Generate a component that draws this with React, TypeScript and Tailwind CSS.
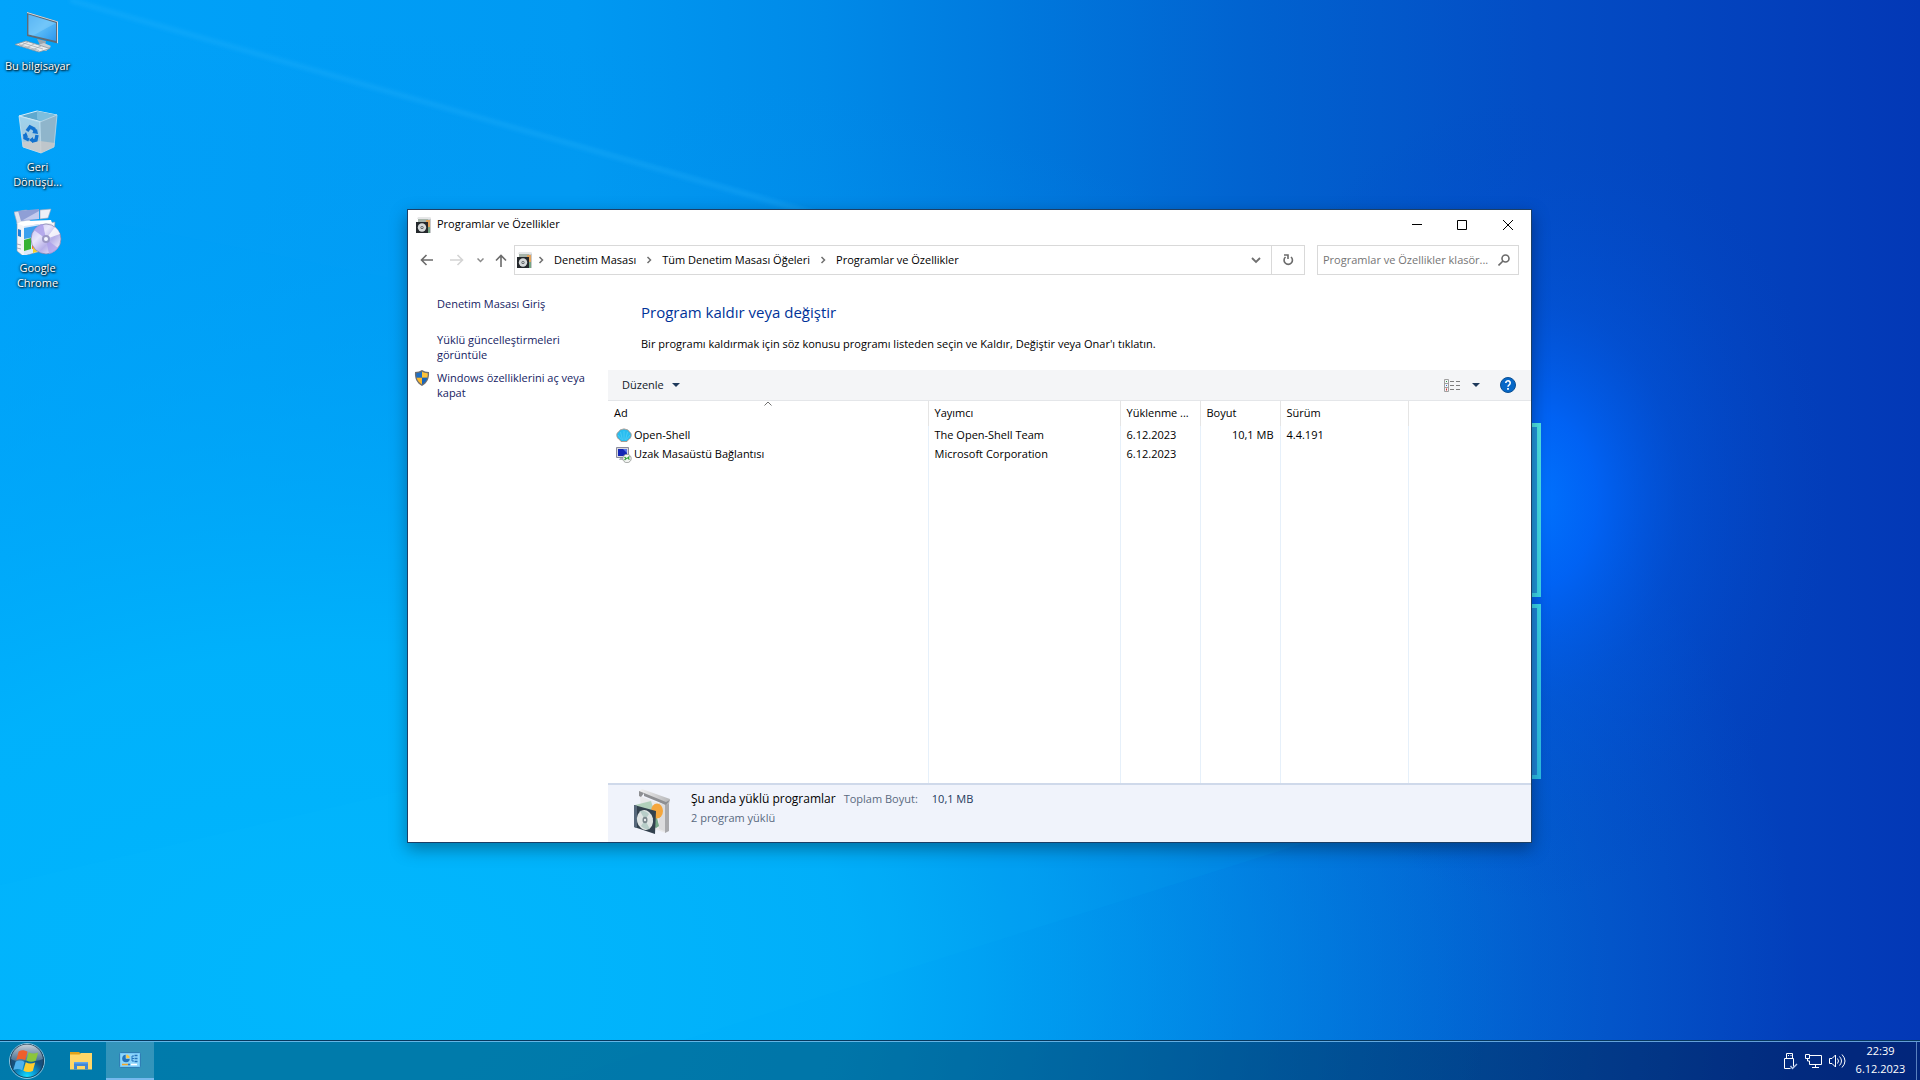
import React from "react";

type Program = {
  name: string;
  publisher: string;
  date: string;
  size: string;
  version: string;
  icon: React.ReactNode;
};

const Wallpaper = () => (
  <svg
    className="absolute inset-0 w-full h-full"
    viewBox="0 0 1920 1080"
    preserveAspectRatio="xMidYMid slice"
    aria-hidden="true"
  >
    <defs>
      <linearGradient id="sky" x1="0" y1="0" x2="1920" y2="0" gradientUnits="userSpaceOnUse">
        <stop offset="0" stopColor="#00a4fb" />
        <stop offset="0.3" stopColor="#0099f2" />
        <stop offset="0.43" stopColor="#008ae8" />
        <stop offset="0.52" stopColor="#007ade" />
        <stop offset="0.65" stopColor="#0163d0" />
        <stop offset="0.8" stopColor="#034dc5" />
        <stop offset="1" stopColor="#0338b6" />
      </linearGradient>
      <radialGradient id="cyan" cx="0" cy="0" r="1" gradientUnits="userSpaceOnUse" gradientTransform="translate(350 980) scale(1450 950)">
        <stop offset="0" stopColor="#00b6fd" />
        <stop offset="0.35" stopColor="#00b4fc" stopOpacity="0.85" />
        <stop offset="0.7" stopColor="#00a2f6" stopOpacity="0.35" />
        <stop offset="1" stopColor="#0090ee" stopOpacity="0" />
      </radialGradient>
      <radialGradient id="glow" cx="0" cy="0" r="1" gradientUnits="userSpaceOnUse" gradientTransform="translate(1530 500) scale(300 400)">
        <stop offset="0" stopColor="#0074ff" />
        <stop offset="0.22" stopColor="#0066fc" stopOpacity="0.85" />
        <stop offset="0.5" stopColor="#0258e4" stopOpacity="0.4" />
        <stop offset="1" stopColor="#0247c2" stopOpacity="0" />
      </radialGradient>
      <linearGradient id="pane" x1="0" y1="424" x2="0" y2="780" gradientUnits="userSpaceOnUse">
        <stop offset="0" stopColor="#4fe6e6" />
        <stop offset="0.5" stopColor="#3cd8ea" />
        <stop offset="1" stopColor="#2cc0e8" />
      </linearGradient>
      <filter id="soft" x="-20%" y="-20%" width="140%" height="140%">
        <feGaussianBlur stdDeviation="2" />
      </filter>
    </defs>
    <rect width="1920" height="1080" fill="url(#sky)" />
    <rect width="1920" height="1080" fill="url(#cyan)" />
    <rect width="1920" height="1080" fill="url(#glow)" />
    <path d="M70 0 L1100 288 L1100 420 L0 200 L0 0z" fill="#14b0ff" opacity="0.06" />
    <path d="M70 0 L815 214" stroke="#3cc0ff" strokeWidth="4" opacity="0.25" filter="url(#soft)" />
    <path d="M0 885 L620 740 L1340 830 L1298 845 L700 1035 L560 1080 L0 1080z" fill="#14c4ff" opacity="0.07" />
    <rect x="1380" y="425" width="159" height="170" fill="#2196dc" stroke="url(#pane)" strokeWidth="4" />
    <rect x="1380" y="606" width="159" height="171" fill="#1f86da" stroke="url(#pane)" strokeWidth="4" />
  </svg>
);

const ComputerIcon = () => (
  <svg width="48" height="48" viewBox="3 -3 48 48">
    <defs>
      <linearGradient id="screen" x1="0" y1="0" x2="1" y2="1">
        <stop offset="0" stopColor="#2f9df0" />
        <stop offset="0.5" stopColor="#5bbcf8" />
        <stop offset="1" stopColor="#2b97ee" />
      </linearGradient>
    </defs>
    <path d="M26 31l9 2-1 5 6 1-5 4-11-3 5-3z" fill="#9aa5ae" />
    <path d="M24 38l9-3 7 3-5 5z" fill="#c7ced4" />
    <path d="M16 4l31 9.500v22L16 28z" fill="#5d6b78" />
    <path d="M16 4l31 9.500v22L46 35V14L16 5z" fill="#d7dde2" />
    <path d="M17.500 6.500L45 15v18L17.500 26.500z" fill="url(#screen)" />
    <path d="M17.500 6.500L45 15 22 27.600l-4.500-1.100z" fill="#8fd2fb" opacity="0.45" />
    <path d="M4 36.500L15 33l24 7.500L28 44z" fill="#e9ecee" stroke="#8b959d" strokeWidth="0.800" />
    <path d="M8 36.500l20 6M12 35l20 6M9 38l8-4M15 40l9-4.500M21 42l9-4" stroke="#9da6ad" strokeWidth="0.700" />
  </svg>
);

const RecycleBinIcon = () => (
  <svg width="48" height="48" viewBox="2 -3 48 48">
    <defs>
      <linearGradient id="binl" x1="0" y1="0" x2="0" y2="1">
        <stop offset="0" stopColor="#9fd3ee" />
        <stop offset="1" stopColor="#a9c3d3" />
      </linearGradient>
    </defs>
    <path d="M7 7L25 2l20 4-15 7z" fill="#5ea9cf" stroke="#d9eef8" />
    <path d="M25 2v8l5 3L45 6z" fill="#7dbedd" />
    <path d="M7 7l21 6 1 31-18-6z" fill="url(#binl)" stroke="#cfe6f2" strokeWidth="0.800" />
    <path d="M45 6L28 13l1 31 13-6z" fill="#8fb5cb" stroke="#bcd9e8" strokeWidth="0.800" />
    <path d="M10 33l18-1 15 2-1 4-13 6-18-6z" fill="#d3cdcb" opacity="0.7" />
    <g fill="none" stroke="#1272cf" strokeWidth="3.400">
      <path d="M15 22l3-4 4 2 1 3" />
      <path d="M25 26l-1 5-4 1" />
      <path d="M17 31l-4-2 0-4" />
    </g>
    <path d="M20 24l6 1-1-5zM21 28v6l-4-3zM11 27l5 1-2-5z" fill="#1272cf" />
  </svg>
);

const SetupIcon = () => (
  <svg width="48" height="48" viewBox="1 -3 48 48">
    <defs>
      <linearGradient id="cd" x1="0" y1="0" x2="1" y2="1">
        <stop offset="0" stopColor="#c3baf2" />
        <stop offset="0.35" stopColor="#e9e6fb" />
        <stop offset="0.6" stopColor="#b8b0e8" />
        <stop offset="1" stopColor="#fdfdff" />
      </linearGradient>
    </defs>
    <path d="M4 13l16 2 22-3-2 26-30 8-6-5z" fill="#f2f4f8" stroke="#8d93a8" strokeWidth="0.600" />
    <path d="M1 2l12-2 4 1v10l-13 2z" fill="#dfe4ef" stroke="#9ba3b8" strokeWidth="0.600" />
    <path d="M5 1l21-2v10L8 11z" fill="#8f9fd6" />
    <path d="M10 10l16-9v8z" fill="#c3cbee" />
    <path d="M27 0l11-1-3 9-8 1z" fill="#eef0f7" stroke="#9ba3b8" strokeWidth="0.600" />
    <path d="M3 13l9-2 26-1 1 3-28 3z" fill="#ffffff" />
    <path d="M11 16l20-2v26l-20 5z" fill="#dbe9fb" />
    <path d="M11 18l17-3-7 12-10 2z" fill="#3aa0ee" />
    <path d="M19 26l8-3v14l-8 2z" fill="#ff7a22" />
    <path d="M11 30l7-2v11l-7 2z" fill="#35b233" />
    <path d="M20 38l6-1v4l-6 2z" fill="#f4cf2c" />
    <path d="M5 19l3 1v7l-3-1z" fill="#1f7ed8" />
    <path d="M4 34l4 1M4 38l4 1" stroke="#a5abbb" />
    <circle cx="33" cy="29" r="15" fill="url(#cd)" stroke="#8480a8" strokeWidth="0.700" />
    <path d="M33 29L21 20a15 15 0 0 1 9-6z" fill="#a99be9" opacity="0.8" />
    <path d="M33 29l12 9a15 15 0 0 1-9 6z" fill="#a99be9" opacity="0.7" />
    <path d="M33 29l14-5a15 15 0 0 0-5-7z" fill="#fff" opacity="0.8" />
    <circle cx="33" cy="29" r="4" fill="#9d98c4" />
    <circle cx="33" cy="29" r="2" fill="#f4f6ff" />
  </svg>
);

const ProgramsIcon = () => (
  <svg className="shrink-0" width="16" height="16" viewBox="0 0 16 16">
    <path d="M2 0h12l1 2v14h-4V4H2z" fill="#c9cbcd" />
    <path d="M2 0h12l1 2H1z" fill="#e6e7e8" />
    <path d="M2 2h10v3H2z" fill="#a8b5ab" />
    <path d="M10 3h4v7h-4z" fill="#e2a35c" />
    <path d="M11 10h3v6h-3z" fill="#76a583" />
    <rect y="5" width="12" height="11" fill="#24282c" />
    <circle cx="6" cy="10.500" r="4.200" fill="#d6d9da" />
    <circle cx="6" cy="10.500" r="1.500" fill="#4e5558" />
    <circle cx="6" cy="10.500" r="0.700" fill="#fff" />
  </svg>
);

const ProgramsLargeIcon = () => (
  <svg className="shrink-0" width="48" height="48" viewBox="0 0 48 48">
    <defs>
      <linearGradient id="box" x1="0" y1="0" x2="1" y2="0">
        <stop offset="0" stopColor="#f2f2f2" />
        <stop offset="1" stopColor="#b6b6b8" />
      </linearGradient>
    </defs>
    <path d="M10 7l26 10v27L12 36z" fill="#e9e9ea" />
    <path d="M29 14l8 2v27l-8-3z" fill="#dcdcde" />
    <path d="M35 15l4-3v30l-4 2z" fill="#a9a9ac" />
    <path d="M9 2l3-2 28 10-1 5-4 1L14 5l-3 3-2-1z" fill="url(#box)" />
    <path d="M9 2l5 2-3 4-2-1zM14 4l22 9 4-2-4 5-22-9z" fill="#8e8f92" />
    <path d="M5 16l16-4 8 25-5 3z" fill="#b2d0bb" />
    <path d="M22 35l4 4 3-2-3-12z" fill="#78a989" />
    <ellipse cx="27" cy="22" rx="6" ry="7.500" fill="#f5a63c" />
    <path d="M4 16l22 6-1 23L4 38z" fill="#33414e" />
    <path d="M4 16l3 1v22l-3-1z" fill="#56677a" />
    <ellipse cx="15" cy="31" rx="8" ry="10" transform="rotate(-12 15 31)" fill="#dfe4e3" />
    <path d="M15 31l-5-9c4-1 7 1 9 3zM15 31l5 9c-4 1-7-1-9-3z" fill="#b8cdc8" />
    <ellipse cx="15" cy="31" rx="2.500" ry="3.200" fill="#7a868c" />
    <ellipse cx="15" cy="31" rx="1" ry="1.300" fill="#f6f7f7" />
  </svg>
);

const ShieldIcon = () => (
  <svg className="shrink-0" width="16" height="16" viewBox="0 0 16 16">
    <path d="M8 0c2 1.200 4 2 7 2 0.500 6-1.500 11-7 14C2.500 13 .5 8 1 2 4 2 6 1.200 8 0z" fill="#6d6f72" />
    <path d="M8 1.500C6.500 2.500 4.800 3 2.300 3.200c-.1 1.700 0 3.100.4 4.600H8z" fill="#1e6fc4" />
    <path d="M8 1.500c1.500 1 3.200 1.500 5.700 1.700.1 1.700 0 3.100-.4 4.600H8z" fill="#fdc33a" />
    <path d="M2.700 7.800c.7 2.800 2.300 5 5.300 6.800V7.800z" fill="#fdb92e" />
    <path d="M13.300 7.800c-.7 2.800-2.300 5-5.300 6.800V7.800z" fill="#1565bd" />
  </svg>
);

const ShellIcon = () => (
  <svg className="shrink-0" width="16" height="16" viewBox="0 0 16 16">
    <path
      d="M5 13.500L4 12C2 11 .7 9 .8 7 .8 5.500 1.500 4.300 2.800 3.800 3.500 2 5 1.500 6 1.600c1-.9 3-.9 4 0 1.500-.1 2.700.7 3.200 2.200 1.300.5 2 1.700 2 3.200.1 2-1.200 4-3.200 5l-1 1.500z"
      fill="#28bdf0"
      stroke="#a9958a"
      strokeWidth="0.900"
    />
    <path d="M8 12V3M6.500 12L4.500 4M9.500 12l2-8M5.500 11.500L2 7M10.500 11.500L14 7" stroke="#63d4f7" strokeWidth="0.600" />
  </svg>
);

const RemoteIcon = () => (
  <svg className="shrink-0" width="16" height="16" viewBox="0 0 16 16">
    <path d="M.5.500h12v10h-12z" fill="#d9d9e2" stroke="#8b8b9a" />
    <path d="M2 2h9v7H2z" fill="#1427b4" />
    <path d="M7 2h4v4z" fill="#5b76ea" />
    <path d="M4 11h5v2H3z" fill="#b5b5bf" />
    <circle cx="11" cy="11.500" r="4.200" fill="#f3f4f2" stroke="#8f9490" strokeWidth="0.800" />
    <path d="M8.500 10l1.800 1.500-1.800 1.500M13.500 9.500L11.700 11l1.800 1.500" fill="none" stroke="#31a336" strokeWidth="1.200" />
  </svg>
);

const StartOrb = () => (
  <svg width="38" height="38" viewBox="0 0 38 38">
    <defs>
      <radialGradient id="orb" cx="0.5" cy="0.950" r="0.850">
        <stop offset="0" stopColor="#18e2ff" />
        <stop offset="0.3" stopColor="#0797d2" />
        <stop offset="0.6" stopColor="#14517f" />
        <stop offset="1" stopColor="#27496b" />
      </radialGradient>
      <linearGradient id="shine" x1="0" y1="0" x2="0" y2="1">
        <stop offset="0" stopColor="#fff" stopOpacity="0.75" />
        <stop offset="1" stopColor="#b9cbdc" stopOpacity="0.3" />
      </linearGradient>
    </defs>
    <circle cx="19" cy="19" r="17.500" fill="url(#orb)" stroke="#8fc3dc" />
    <circle cx="19" cy="19" r="16.500" fill="none" stroke="#17384f" strokeWidth="0.800" />
    <path d="M3 17C4 8 11 2.500 19 2.500S34 8 35 17c-6 3-10 1-16 1.500S8 20 3 17z" fill="url(#shine)" />
    <g transform="translate(-3.500 -3) scale(1.180)">
      <path d="M12 10.500c3-1.500 5-1 7.500.3L17.500 18c-2.500-1.300-4.500-1.500-7.500-.3z" fill="#ee5f2c" />
      <path d="M20.500 11.300c2.500 1.300 5 1.500 8 .2l-2 7c-3 1.200-5.500 1-8-.2z" fill="#8cc63c" />
      <path d="M9.500 19c3-1.300 5-1 7.500.3l-2 7.200c-2.500-1.300-4.500-1.500-7.500-.3z" fill="#4fb2ee" />
      <path d="M18 19.700c2.500 1.300 5 1.500 8 .2l-2 7.300c-3 1.200-5.500 1-8-.2z" fill="#ffcd2e" />
    </g>
  </svg>
);

const ExplorerIcon = () => (
  <svg width="22" height="18" viewBox="0 0 22 18">
    <path d="M0 0h9l2 2h11v4H0z" fill="#e0a21a" />
    <path d="M0 2.500h9.500l1.500-1.500h11V17.500H0z" fill="#ffd768" />
    <path d="M4 10h14v7.500h-3V14H7v3.500H4z" fill="#3f87d8" />
    <path d="M4 10h14v1.500H4z" fill="#62a6ec" />
  </svg>
);

const ControlPanelIcon = () => (
  <svg width="22" height="16" viewBox="0 0 22 16">
    <rect x="0.500" y="0.500" width="21" height="15" rx="1" fill="#5cbcf2" stroke="#2f7fb5" />
    <rect x="1.500" y="1.500" width="19" height="13" fill="#8fd6fb" />
    <circle cx="7" cy="6.500" r="3.800" fill="#2173bd" />
    <path d="M7 6.500V2.300a4.200 4.200 0 0 1 4 4.200z" fill="#ffc43d" stroke="#8fd6fb" strokeWidth="0.700" />
    <path d="M13 4v5M13 6.500h2M13 9h2M13 4h2" stroke="#2173bd" fill="none" />
    <path d="M15.500 3.500h3M15.500 6.500h3M15.500 9.500h3" stroke="#2173bd" strokeWidth="1.400" />
    <path d="M3 12.500h6" stroke="#f0a52b" strokeWidth="1.500" />
    <path d="M12 12.500h6" stroke="#fff" strokeWidth="1.500" />
    <circle cx="10" cy="12.500" r="1" fill="#2173bd" />
  </svg>
);

const Crumb = ({ label }: { label: string }) => (
  <li className="flex items-center">
    <svg className="mx-1" width="8" height="8" viewBox="0 0 8 8" fill="none" stroke="#707070" strokeWidth="1.500">
      <path d="M2.500 1l3 3-3 3" />
    </svg>
    <button className="px-[5px]">{label}</button>
  </li>
);

const Caret = () => (
  <svg width="8" height="4" viewBox="0 0 8 4">
    <path d="M0 0h8L4 4z" fill="#1e395b" />
  </svg>
);

const programs: Program[] = [
  { name: "Open-Shell", publisher: "The Open-Shell Team", date: "6.12.2023", size: "10,1 MB", version: "4.4.191", icon: <ShellIcon /> },
  { name: "Uzak Masaüstü Bağlantısı", publisher: "Microsoft Corporation", date: "6.12.2023", size: "", version: "", icon: <RemoteIcon /> },
];

const TitleBar = () => (
  <header className="flex items-center h-[29px] pl-2">
    <ProgramsIcon />
    <h1 className="flex-1 ml-[5px] text-black">Programlar ve Özellikler</h1>
    <button className="w-[45px] h-full flex items-center justify-center" aria-label="Simge durumuna küçült">
      <svg width="10" height="10" viewBox="0 0 10 10" stroke="#000"><path d="M0 4.500h10" /></svg>
    </button>
    <button className="w-[45px] h-full flex items-center justify-center" aria-label="Ekranı kapla">
      <svg width="10" height="10" viewBox="0 0 10 10" stroke="#000" fill="none"><path d="M.5.500h9v9h-9z" /></svg>
    </button>
    <button className="w-[47px] h-full flex items-center justify-center" aria-label="Kapat">
      <svg width="10" height="10" viewBox="0 0 10 10" stroke="#000"><path d="M0 0l10 10M10 0L0 10" /></svg>
    </button>
  </header>
);

const NavBar = () => (
  <nav className="flex items-center mt-[6px] pr-3 h-[30px]">
    <button className="w-[38px] flex justify-center" aria-label="Geri">
      <svg width="14" height="12" viewBox="0 0 14 12" fill="none" stroke="#6b6b6b" strokeWidth="1.600"><path d="M13 6H2M6.500 1L1.500 6l5 5" /></svg>
    </button>
    <button className="w-[22px] flex justify-center" aria-label="İleri">
      <svg width="14" height="12" viewBox="0 0 14 12" fill="none" stroke="#d4d4d4" strokeWidth="1.600"><path d="M0 6h12M7.500 1l5 5-5 5" /></svg>
    </button>
    <button className="w-6 flex justify-center" aria-label="Son konumlar">
      <svg width="7" height="5" viewBox="0 0 7 5" fill="none" stroke="#8a8a8a" strokeWidth="1.500"><path d="M.5.500l3 3 3-3" /></svg>
    </button>
    <button className="w-[18px] flex justify-center" aria-label="Yukarı">
      <svg width="12" height="13" viewBox="0 0 12 13" fill="none" stroke="#6b6b6b" strokeWidth="1.600"><path d="M6 13V2M1 6.500l5-5 5 5" /></svg>
    </button>
    <div className="flex flex-1 items-center h-[30px] ml-1 border border-[#d9d9d9]">
      <div className="pl-[2px]">
        <ProgramsIcon />
      </div>
      <ol className="flex flex-1 items-center">
        <Crumb label="Denetim Masası" />
        <Crumb label="Tüm Denetim Masası Öğeleri" />
        <Crumb label="Programlar ve Özellikler" />
      </ol>
      <button className="w-[30px] flex justify-center" aria-label="Önceki konumlar">
        <svg width="10" height="7" viewBox="0 0 10 7" fill="none" stroke="#707070" strokeWidth="1.800"><path d="M1 1l4 4 4-4" /></svg>
      </button>
      <button className="w-[33px] h-full flex items-center justify-center border-l border-[#d9d9d9]" aria-label="Yenile">
        <svg width="12" height="12" viewBox="0 0 12 12" fill="none" stroke="#6b6b6b" strokeWidth="1.600">
          <path d="M3.500 3a4.200 4.200 0 1 0 5.500 0" />
          <path d="M2 1h4v4" />
        </svg>
      </button>
    </div>
    <div className="flex items-center w-[202px] h-[30px] ml-3 pl-[5px] pr-2 border border-[#d9d9d9]">
      <input
        type="text"
        aria-label="Ara"
        placeholder="Programlar ve Özellikler klasör..."
        className="flex-1 min-w-0 outline-none placeholder:text-[#757575]"
      />
      <svg className="shrink-0" width="12" height="12" viewBox="0 0 12 12" fill="none" stroke="#6b6b6b" strokeWidth="1.600">
        <circle cx="7.500" cy="4.500" r="3.500" />
        <path d="M5 7L.5 11.500" />
      </svg>
    </div>
  </nav>
);

const Sidebar = () => (
  <aside className="w-[200px] shrink-0 pl-[6px] pt-[21px] leading-[15px] text-[#151c63]">
    <a href="#" className="block ml-[23px]">Denetim Masası Giriş</a>
    <a href="#" className="block ml-[23px] mt-[21px] w-[150px]">Yüklü güncelleştirmeleri görüntüle</a>
    <a href="#" className="flex gap-[7px] mt-2">
      <ShieldIcon />
      <span className="w-[164px]">Windows özelliklerini aç veya kapat</span>
    </a>
  </aside>
);

const CommandBar = () => (
  <div className="flex items-center h-[31px] pl-[14px] pr-[15px] bg-[#f4f5f7] border-b border-[#e4e6e9]">
    <button className="flex items-center gap-2 text-[#111827]">
      Düzenle
      <Caret />
    </button>
    <div className="flex-1" />
    <button aria-label="Görünüm">
      <svg width="17" height="13" viewBox="0 0 17 13" fill="none" stroke="#7d7d7d">
        <path d="M.5.500h4v12h-4zM.5 4.500h4M.5 8.500h4" stroke="#a0a0a0" />
        <path d="M6 2.500h4M12 2.500h4M6 6.500h4M12 6.500h4M6 10.500h4M12 10.500h4" />
        <path d="M2 2.500h1" stroke="#2e9a48" />
        <path d="M2 6.500h1" stroke="#2f6fd0" />
        <path d="M2 10.500h1" stroke="#d03030" strokeWidth="2" />
      </svg>
    </button>
    <button className="ml-[11px]" aria-label="Diğer seçenekler">
      <Caret />
    </button>
    <button className="ml-5" aria-label="Yardım">
      <svg width="16" height="16" viewBox="0 0 16 16">
        <circle cx="8" cy="8" r="7.500" fill="#0668c8" stroke="#0b4f93" />
        <path d="M5.800 6a2.200 2.200 0 1 1 3.400 1.800C8.300 8.400 8 8.800 8 9.800" fill="none" stroke="#fff" strokeWidth="1.600" />
        <path d="M7.100 11h1.800v1.800H7.100z" fill="#fff" />
      </svg>
    </button>
  </div>
);

const headCell = "relative px-[6px] font-normal text-left border-r border-[#e5e5e5] truncate";
const bodyCell = "px-[6px] border-r border-[#e6f0fa] whitespace-nowrap";

const ProgramTable = () => (
  <table className="w-full h-full table-fixed text-black">
    <colgroup>
      <col className="w-[320px]" />
      <col className="w-[192px]" />
      <col className="w-[80px]" />
      <col className="w-[80px]" />
      <col className="w-[128px]" />
      <col />
    </colgroup>
    <thead>
      <tr className="h-[25px]">
        <th className={headCell}>
          Ad
          <svg className="absolute inset-x-0 top-0 mx-auto" width="8" height="5" viewBox="0 0 8 5" fill="none" stroke="#707070">
            <path d="M.5 4.500L4 1l3.500 3.500" />
          </svg>
        </th>
        <th className={headCell}>Yayımcı</th>
        <th className={headCell}>Yüklenme ...</th>
        <th className={headCell}>Boyut</th>
        <th className={headCell}>Sürüm</th>
        <th />
      </tr>
    </thead>
    <tbody>
      {programs.map((p) => (
        <tr key={p.name} className="h-[19px]">
          <td className={bodyCell}>
            <div className="flex items-center gap-[2px] pl-[2px]">
              {p.icon}
              {p.name}
            </div>
          </td>
          <td className={bodyCell}>{p.publisher}</td>
          <td className={bodyCell}>{p.date}</td>
          <td className={`${bodyCell} text-right`}>{p.size}</td>
          <td className={bodyCell}>{p.version}</td>
          <td />
        </tr>
      ))}
      <tr className="h-full" aria-hidden="true">
        <td className={bodyCell} />
        <td className={bodyCell} />
        <td className={bodyCell} />
        <td className={bodyCell} />
        <td className={bodyCell} />
        <td />
      </tr>
    </tbody>
  </table>
);

const DetailsPane = () => (
  <footer className="flex h-[59px] pl-[22px] pt-1 bg-[#f0f3fb] border-t-2 border-[#cfd9ea]">
    <ProgramsLargeIcon />
    <div className="ml-[13px] leading-[19px] text-[#5a6a80]">
      <p className="flex">
        <span className="text-[12px] text-black">Şu anda yüklü programlar</span>
        <span className="ml-2">Toplam Boyut:</span>
        <span className="ml-[14px] text-[#1e395b]">10,1 MB</span>
      </p>
      <p>2 program yüklü</p>
    </div>
  </footer>
);

const ProgramsWindow = () => (
  <main className="absolute left-[407px] right-[388px] top-[209px] bottom-[197px] flex flex-col bg-white border border-[#1c3f66] shadow-[0_6px_16px_rgba(0,0,0,0.35)]">
    <TitleBar />
    <NavBar />
    <div className="flex flex-1 min-h-0">
      <Sidebar />
      <section className="flex flex-col flex-1 min-w-0">
        <div className="h-[95px] pl-[33px] pt-[27px]">
          <h2 className="text-[15px] leading-5 text-[#003399]">Program kaldır veya değiştir</h2>
          <p className="mt-3 leading-5 text-black">
            Bir programı kaldırmak için söz konusu programı listeden seçin ve Kaldır, Değiştir veya Onar'ı tıklatın.
          </p>
        </div>
        <CommandBar />
        <div className="flex-1 min-h-0">
          <ProgramTable />
        </div>
        <DetailsPane />
      </section>
    </div>
  </main>
);

const DesktopIcon = ({ icon, label }: { icon: React.ReactNode; label: string }) => (
  <button className="flex flex-col items-center w-[75px] h-[101px] leading-[15px] text-white [text-shadow:1px_1px_2px_#000,0_0_3px_#000]">
    {icon}
    <span className="mt-[5px] whitespace-pre-line">{label}</span>
  </button>
);

const Taskbar = () => (
  <footer className="relative flex h-10 border-t border-[#06385e] bg-black/32">
    <div className="flex flex-1 border-t border-[#8fd0ff]/70">
      <button className="pl-2 pr-3" aria-label="Başlat">
        <StartOrb />
      </button>
      <button className="w-[46px] mr-[2px] flex items-center justify-center" aria-label="Dosya Gezgini">
        <ExplorerIcon />
      </button>
      <button className="w-12 flex items-center justify-center bg-white/20 border-b-2 border-[#76b9ed]" aria-label="Denetim Masası">
        <ControlPanelIcon />
      </button>
      <div className="flex-1" />
      <div className="flex items-center gap-[7px] pr-[6px]">
        <svg width="15" height="18" viewBox="0 0 15 18" fill="none" stroke="#fff">
          <path d="M3.500 6.500v-5h6v5M1.500 6.500h9v8M1.500 6.500v10h6" />
          <path d="M5 3.500h1M7.500 3.500h1" />
          <path d="M7.500 14l2 2.500 4.500-4.500" stroke="#b9c9ea" strokeWidth="1.400" />
        </svg>
        <svg width="17" height="14" viewBox="0 0 17 14" fill="none" stroke="#fff">
          <path d="M5 1.500h11.500v9H4.500V7M.5.500h4v4h-4zM2.500 4.500V7h2M10.500 10.500v3M7 13.500h7" />
        </svg>
        <svg width="17" height="14" viewBox="0 0 17 14" fill="none" stroke="#fff">
          <path d="M.5 4.500h2.500L6.500 1v12L3 9.500H.5z" />
          <path d="M8.500 4.500q2 2.500 0 5M10.500 2.500q4 4.500 0 9M13 .500q6 6.500 0 13" />
        </svg>
      </div>
      <time className="w-[57px] mr-[7px] leading-[18px] text-center text-white">
        22:39
        <br />
        6.12.2023
      </time>
      <button className="w-1 border-l border-[#7fa6dd]/70" aria-label="Masaüstünü göster" />
    </div>
  </footer>
);

export default function App() {
  return (
    <div className="relative flex flex-col h-screen overflow-hidden text-[11px] font-['Open_Sans','Noto_Sans',sans-serif]">
      <Wallpaper />
      <div className="relative flex-1">
        <div className="flex flex-col pt-[5px]">
          <DesktopIcon icon={<ComputerIcon />} label="Bu bilgisayar" />
          <DesktopIcon icon={<RecycleBinIcon />} label={"Geri\nDönüşü..."} />
          <DesktopIcon icon={<SetupIcon />} label={"Google\nChrome"} />
        </div>
        <ProgramsWindow />
      </div>
      <Taskbar />
    </div>
  );
}
